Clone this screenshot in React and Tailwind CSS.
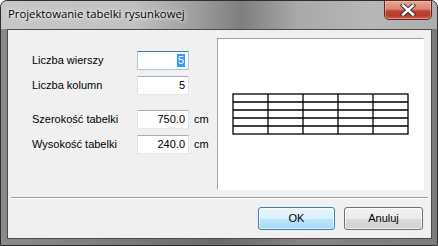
import React from 'react';

const rows = [
    { label: 'Liczba wierszy', value: '5', focused: true },
    { label: 'Liczba kolumn', value: '5' },
    { label: 'Szerokość tabelki', value: '750.0', unit: 'cm', gap: true },
    { label: 'Wysokość tabelki', value: '240.0', unit: 'cm' },
];

function Field({ row }) {
    return (
        <div className={`flex items-center ${row.gap ? 'mt-[15px]' : 'mt-[6px]'} first:mt-0`}>
            <span className="w-[105px] text-[11px] text-black leading-none">{row.label}</span>
            <div
                className={`w-[52px] h-[19px] flex items-center justify-end pr-[3px] bg-white border ${
                    row.focused
                        ? 'border-[#a4c9e3] border-t-[#3d7bad]'
                        : 'border-[#e2e3ea] border-t-[#abadb3] border-b-[#e3e9ef]'
                }`}
            >
                {row.focused ? (
                    <span className="bg-[#3399ff] text-white text-[11px] leading-[13px] px-[1px]">{row.value}</span>
                ) : (
                    <span className="text-black text-[11px] leading-none">{row.value}</span>
                )}
            </div>
            {row.unit && <span className="ml-[5px] text-[11px] text-black leading-none">{row.unit}</span>}
        </div>
    );
}

function PreviewTable() {
    const cols = 5;
    const rowsN = 5;
    const cw = 35;
    const rh = 8;
    return (
        <svg width="177" height="42" viewBox="0 0 177 42">
            <g stroke="#000" strokeWidth="1.3" fill="none">
                <rect x="1" y="1" width={cols * cw} height={rowsN * rh} />
                {Array.from({ length: cols - 1 }).map((_, i) => (
                    <line key={'c' + i} x1={1 + (i + 1) * cw} y1="1" x2={1 + (i + 1) * cw} y2={1 + rowsN * rh} />
                ))}
                {Array.from({ length: rowsN - 1 }).map((_, i) => (
                    <line key={'r' + i} x1="1" y1={1 + (i + 1) * rh} x2={1 + cols * cw} y2={1 + (i + 1) * rh} />
                ))}
            </g>
        </svg>
    );
}

export default function App() {
    return (
        <div
            className="w-[438px] h-[246px] flex flex-col rounded-t-[7px] border border-[#2e2e2e] bg-[linear-gradient(90deg,#8a8a8a_0%,#7a7a7a_30%,#6a6a6a_50%,#858585_70%,#7c7c7c_100%)]"
            style={{ fontFamily: '"Liberation Sans", Arial, sans-serif' }}
        >
            {/* title bar */}
            <div className="relative h-[28px] shrink-0 rounded-t-[6px] bg-[linear-gradient(90deg,#c7c7c7_0%,#c1c1c1_30%,#9a9a9a_46%,#7e7e7e_55%,#a9a9a9_68%,#b7b7b7_85%,#adadad_100%)]">
                <span
                    className="absolute left-[7px] top-[5px] text-[11.3px] text-black [text-shadow:0_0_6px_rgba(255,255,255,0.95),0_0_3px_rgba(255,255,255,0.9)]"
                    style={{ fontFamily: '"Open Sans", "Noto Sans", sans-serif' }}
                >
                    Projektowanie tabelki rysunkowej
                </span>
                <div className="absolute right-[5px] top-[-1px] w-[48px] h-[20px] rounded-b-[5px] border border-[#5a2a22] bg-[linear-gradient(180deg,#e9a594_0%,#d88670_45%,#c1452f_55%,#b8392a_80%,#d0624a_100%)] flex items-center justify-center shadow-[inset_0_0_0_1px_rgba(255,200,190,0.5)]">
                    <svg width="16" height="12" viewBox="0 0 16 12">
                        <path d="M3 1.5 L13 10.5 M13 1.5 L3 10.5" stroke="#3a3a3a" strokeWidth="4.4" strokeLinecap="square" />
                        <path d="M3 1.5 L13 10.5 M13 1.5 L3 10.5" stroke="#fff" strokeWidth="2.4" strokeLinecap="square" />
                    </svg>
                </div>
            </div>

            {/* client area */}
            <div className="ml-[6px] w-[425px] h-[210px] border border-[#4a4a4a] bg-[#f0f0f0] flex flex-col">
                <div className="flex pt-[8px]">
                    <div className="w-[209px] pl-[24px] pt-[13px] flex flex-col">
                        {rows.map((r) => (
                            <Field key={r.label} row={r} />
                        ))}
                    </div>
                    <div className="w-[207px] h-[152px] bg-white border border-t-[#a0a0a0] border-l-[#a0a0a0] border-r-white border-b-white flex items-center justify-center">
                        <PreviewTable />
                    </div>
                </div>

                <div className="ml-[3px] mt-[7px] w-[417px] h-[2px] border-t border-t-[#a0a0a0] border-b border-b-white" />

                <div className="flex justify-end gap-[9px] pr-[8px] mt-[8px]">
                    <button className="w-[77px] h-[23px] rounded-[3px] border border-[#3c7fb1] bg-[linear-gradient(180deg,#eaf6fd_0%,#d9f0fc_50%,#bee6fd_51%,#a7d9f5_100%)] shadow-[inset_0_0_0_1px_#ffffffa0] text-[11px] text-black">
                        OK
                    </button>
                    <button className="w-[79px] h-[23px] rounded-[3px] border border-[#707070] bg-[linear-gradient(180deg,#f2f2f2_0%,#ebebeb_50%,#dddddd_51%,#cfcfcf_100%)] shadow-[inset_0_0_0_1px_#ffffffb0] text-[11px] text-black">
                        Anuluj
                    </button>
                </div>
            </div>
        </div>
    );
}
